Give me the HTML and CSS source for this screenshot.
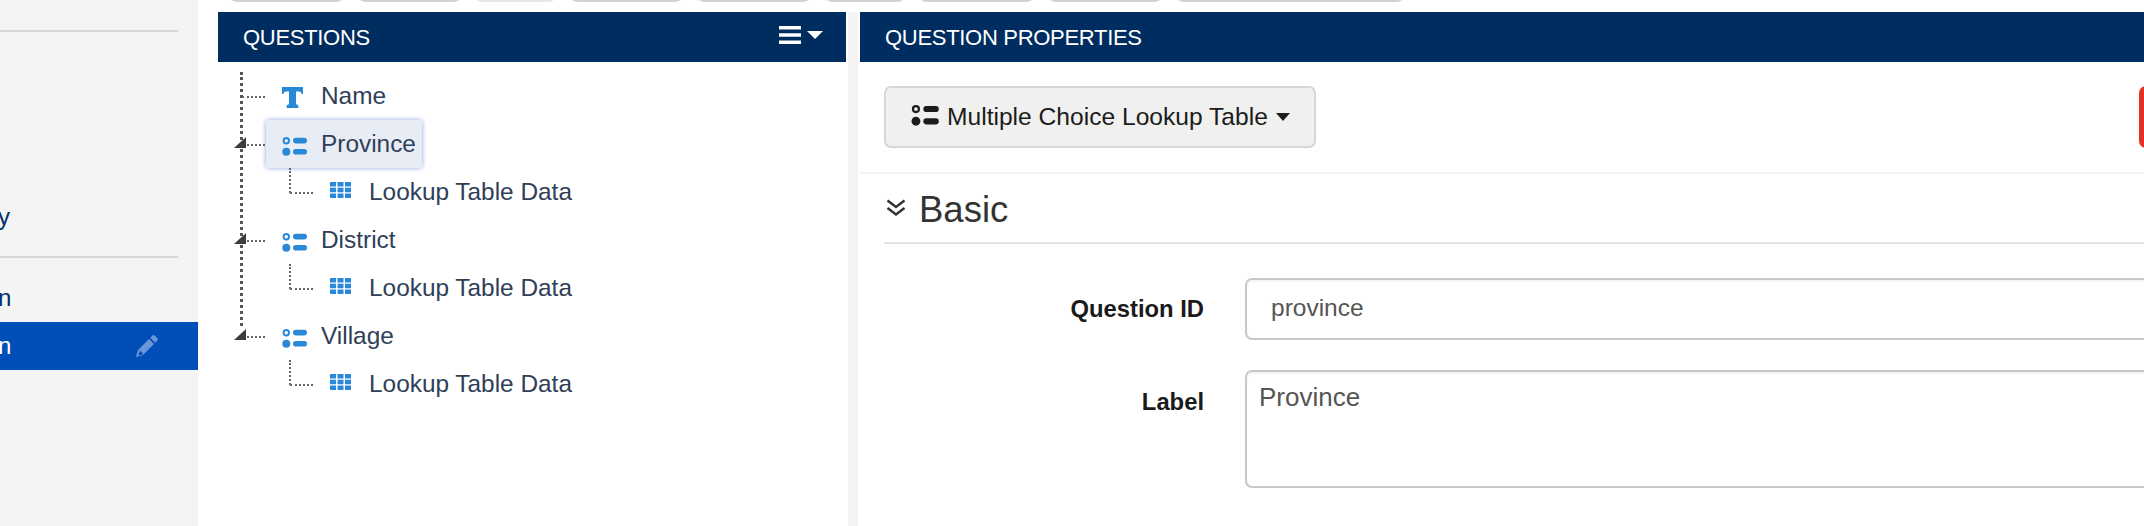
FILE: index.html
```html
<!DOCTYPE html>
<html lang="en">
<head>
    <meta charset="UTF-8">
    <title>Question Properties</title>
    <link rel="stylesheet" href="styles.css">
</head>
<body>
    <svg class="defs" width="0" height="0">
        <symbol id="icon-list" viewBox="0 0 25 19">
            <circle cx="4.300" cy="3.700" r="2.700" fill="none" stroke="currentColor" stroke-width="2"/>
            <circle cx="4.300" cy="14.700" r="4" fill="currentColor"/>
            <rect x="11" y="0.800" width="14" height="5.600" rx="2.800" fill="currentColor"/>
            <rect x="11" y="12" width="14" height="5.600" rx="2.800" fill="currentColor"/>
        </symbol>
        <symbol id="icon-grid" viewBox="0 0 21 16">
            <path fill="currentColor" d="M0 1a1 1 0 0 1 1-1h5v4.400H0zM7.500 0h6v4.400h-6zM15 0h5a1 1 0 0 1 1 1v3.400h-6zM0 5.800h6v4.400H0zM7.500 5.800h6v4.400h-6zM15 5.800h6v4.400h-6zM0 11.600h6V16H1a1 1 0 0 1-1-1zM7.500 11.600h6V16h-6zM15 11.600h6V15a1 1 0 0 1-1 1h-5z"/>
        </symbol>
    </svg>

    <div class="app">
        <div class="sidebar">
            <div class="side-rule"></div>
            <div class="side-link summary">y</div>
            <div class="side-rule"></div>
            <div class="side-link design">n</div>
            <div class="side-link active">
                <span>n</span>
                <svg class="pencil" viewBox="0 0 22 22"><path fill="currentColor" d="M16.500 0.600a1.600 1.600 0 0 1 2.200 0l2.700 2.700a1.600 1.600 0 0 1 0 2.200l-2.200 2.200-4.900-4.900zM13 4.100l4.900 4.900L7 19.900 0.500 22 0 21.500 2.100 15zM3.800 16.200l-1.300 3.300 1 1 3.300-1.300-0.300-1.700-1.500-0.200-0.200-1.500z"/></svg>
            </div>
        </div>

        <div class="main">
            <div class="toolbar">
                <div class="tool w119"></div>
                <div class="tool w107"></div>
                <div class="tool w85 light"></div>
                <div class="tool w117"></div>
                <div class="tool w118"></div>
                <div class="tool w84"></div>
                <div class="tool w119"></div>
                <div class="tool w118"></div>
                <div class="tool w232"></div>
            </div>

            <div class="panels">
                <div class="questions">
                    <div class="panel-head">
                        <span>QUESTIONS</span>
                        <span class="head-menu">
                            <svg class="burger" viewBox="0 0 22 18"><path fill="currentColor" d="M0 0h22v3.500H0zM0 7.200h22v3.500H0zM0 14.400h22v3.500H0z"/></svg>
                            <span class="caret white"></span>
                        </span>
                    </div>
                    <ul class="tree">
                        <li class="node">
                            <div class="item">
                                <svg class="icon t-icon" viewBox="0 0 21 21"><path fill="currentColor" d="M0 0h21v7h-1.500c-0.400-1.600-1-2.400-2.800-2.400H14v11.900c0 0.900 0.500 1.300 2.300 1.400V21H4.700v-3.100c1.800-0.100 2.300-0.500 2.300-1.400V4.600H4.300C2.500 4.600 1.900 5.400 1.500 7H0z"/></svg>
                                <span>Name</span>
                            </div>
                        </li>
                        <li class="node open">
                            <div class="item selected">
                                <svg class="icon"><use href="#icon-list"/></svg>
                                <span>Province</span>
                            </div>
                            <div class="child">
                                <div class="item">
                                    <svg class="icon"><use href="#icon-grid"/></svg>
                                    <span>Lookup Table Data</span>
                                </div>
                            </div>
                        </li>
                        <li class="node open">
                            <div class="item">
                                <svg class="icon"><use href="#icon-list"/></svg>
                                <span>District</span>
                            </div>
                            <div class="child">
                                <div class="item">
                                    <svg class="icon"><use href="#icon-grid"/></svg>
                                    <span>Lookup Table Data</span>
                                </div>
                            </div>
                        </li>
                        <li class="node open last">
                            <div class="item">
                                <svg class="icon"><use href="#icon-list"/></svg>
                                <span>Village</span>
                            </div>
                            <div class="child">
                                <div class="item">
                                    <svg class="icon"><use href="#icon-grid"/></svg>
                                    <span>Lookup Table Data</span>
                                </div>
                            </div>
                        </li>
                    </ul>
                </div>

                <div class="gutter"></div>

                <div class="properties">
                    <div class="panel-head">QUESTION PROPERTIES</div>
                    <div class="type-row">
                        <div class="type-btn">
                            <svg class="type-icon"><use href="#icon-list"/></svg>
                            <span>Multiple Choice Lookup Table</span>
                            <span class="caret"></span>
                        </div>
                        <div class="delete-btn"></div>
                    </div>
                    <div class="section">
                        <h2>
                            <svg class="chevrons" viewBox="0 0 20 18"><path fill="none" stroke="currentColor" stroke-width="2.400" d="M1.500 1.500l8.500 6.500 8.500-6.500M1.500 9l8.500 6.500L18.500 9"/></svg>
                            Basic
                        </h2>
                        <div class="field">
                            <label>Question ID</label>
                            <div class="input">province</div>
                        </div>
                        <div class="field">
                            <label>Label</label>
                            <div class="input textarea">Province</div>
                        </div>
                    </div>
                </div>
            </div>
        </div>
    </div>
</body>
</html>
```

FILE: styles.css
```css
html, body { margin: 0; height: 526px; overflow: hidden; background: #fff; }
body { font-family: "Liberation Sans", Arial, sans-serif; }
.defs { position: absolute; }
.app { display: flex; height: 526px; }

/* left nav, cut off by the screenshot */
.sidebar { width: 198px; flex: none; background: #f4f4f4; color: #00306b; font-size: 24px; padding-top: 30px; box-sizing: border-box; overflow: hidden; }
.side-rule { height: 2px; width: 178px; background: #d6d6d6; }
.side-link { height: 48px; line-height: 48px; margin-left: -2px; }
.side-link.summary { margin-top: 161px; margin-bottom: 15px; }
.side-link.design { margin-top: 16px; }
.side-link.active { display: flex; justify-content: space-between; align-items: center; background: #004fb8; color: #fff; padding-right: 40px; }
.pencil { width: 22px; height: 22px; color: #6b97d8; }

.main { flex: 1; min-width: 0; padding-left: 20px; display: flex; flex-direction: column; }
.toolbar { height: 12px; display: flex; gap: 10px; padding-left: 9px; flex: none; }
.tool { height: 20px; margin-top: -18px; box-sizing: border-box; border-bottom: 2px solid #d2d2d2; border-radius: 12px; }
.tool.light { border-color: #e6e6e6; }
.w119 { width: 119px; }
.w107 { width: 107px; }
.w85 { width: 85px; }
.w117 { width: 117px; }
.w118 { width: 118px; }
.w84 { width: 84px; }
.w232 { width: 232px; }

.panels { flex: 1; display: flex; min-height: 0; }
.questions { width: 628px; flex: none; }
.gutter { width: 10px; flex: none; margin: 0 2px; background: #f4f4f4; }
.properties { flex: 1; min-width: 0; overflow: hidden; }

.panel-head { height: 50px; box-sizing: border-box; padding: 2px 23px 0 25px; background: #002d5f; color: #fff; display: flex; align-items: center; justify-content: space-between; font-size: 22px; letter-spacing: -0.3px; }
.head-menu { display: flex; align-items: center; gap: 6px; margin-top: -6px; }
.burger { width: 22px; height: 18px; }
.caret { display: inline-block; width: 0; height: 0; border-left: 7px solid transparent; border-right: 7px solid transparent; border-top: 8px solid #1c1c1c; }
.caret.white { border-top-color: #fff; border-left-width: 8px; border-right-width: 8px; border-top-width: 8px; }

/* tree */
.tree { list-style: none; margin: 0; padding: 10px 0 0 48px; position: relative; font-size: 24.4px; color: #2f4058; }
.tree::before { content: ""; position: absolute; left: 22px; top: 10px; height: 254px; border-left: 3px dotted #555; }
.node { position: relative; }
.item { height: 48px; width: max-content; display: flex; align-items: center; padding: 0 6px 0 16px; box-sizing: border-box; position: relative; }
.item::before { content: ""; position: absolute; left: -24px; top: 24px; width: 23px; border-top: 2px dotted #666; }
.item.selected { background: #e8edf5; border-radius: 4px; box-shadow: 0 0 5px rgba(70, 120, 190, 0.65); }
.open > .item::after { content: ""; position: absolute; left: -32px; top: 17px; border-left: 12px solid transparent; border-bottom: 11px solid #3c3c3c; }
.icon { width: 25px; height: 19px; margin: 4px 14px 0 0; color: #2a88d8; flex: none; }
.icon.t-icon { width: 21px; height: 21px; margin: 2px 18px 0 0; }
.child { padding-left: 48px; position: relative; }
.child::before { content: ""; position: absolute; left: 23px; top: 0; height: 25px; border-left: 2px dotted #666; }
.child .icon { width: 21px; height: 16px; margin: 0 18px 4px 0; }

/* properties */
.type-row { height: 112px; box-sizing: border-box; border-bottom: 2px solid #f4f4f4; padding: 24px 0 0 24px; display: flex; justify-content: space-between; }
.type-btn { width: 432px; height: 62px; box-sizing: border-box; background: #f0f0ee; border: 2px solid #d6d6d2; border-radius: 7px; display: flex; align-items: center; padding-left: 25px; font-size: 24.6px; color: #1c1c1c; }
.type-icon { width: 28px; height: 21px; margin: 0 8px 4px 0; color: #1c1c1c; }
.type-btn .caret { margin-left: 8px; }
.delete-btn { width: 60px; height: 62px; flex: none; margin-right: -55px; box-sizing: border-box; background: #e53124; border-radius: 7px; }

.section { padding: 0 0 0 24px; }
.section h2 { margin: 0 0 34px; height: 70px; box-sizing: border-box; border-bottom: 2px solid #e3e3e3; display: flex; align-items: center; gap: 13px; font-size: 36.500px; font-weight: normal; color: #333; padding: 4px 0 0 2px; }
.chevrons { width: 20px; height: 18px; color: #333; margin-top: -4px; }
.field { display: flex; margin-bottom: 30px; }
.field label { width: 320px; flex: none; text-align: right; font-weight: bold; font-size: 23.8px; color: #1a1a1a; line-height: 62px; }
.field + .field label { line-height: 64px; }
.input { flex: 1; margin: 0 -10px 0 41px; height: 62px; box-sizing: border-box; border: 2px solid #c8c8c8; border-radius: 7px; box-shadow: inset 0 2px 2px rgba(0, 0, 0, 0.05); padding: 0 24px; line-height: 56px; font-size: 24.5px; color: #555; }
.input.textarea { height: 118px; padding: 0 12px; line-height: 50px; font-size: 26px; }
```
